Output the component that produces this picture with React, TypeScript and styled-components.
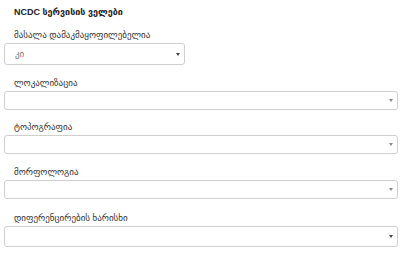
import styled, { createGlobalStyle } from 'styled-components'

const GlobalStyle = createGlobalStyle`
  body {
    margin: 0;
    background: #fff;
    font-family: "Liberation Sans", "DejaVu Sans", Arial, sans-serif;
  }
`

const Panel = styled.div`
  width: 408px;
  padding: 6px 10px 0 4px;
  box-sizing: border-box;
  display: flex;
  flex-direction: column;
`

const Title = styled.div`
  font-size: 9px;
  font-weight: 700;
  color: #222;
  padding-left: 10px;
  line-height: 12px;
  margin-bottom: 11px;
`

const Field = styled.div<{ $narrow?: boolean; $space: number }>`
  display: flex;
  flex-direction: column;
  gap: 2px;
  width: ${({ $narrow }) => ($narrow ? '181px' : '394px')};
  margin-bottom: ${({ $space }) => $space}px;
`

const Label = styled.label`
  font-size: 9px;
  color: #333;
  padding-left: 10px;
  line-height: 12px;
  white-space: nowrap;
`

const SelectBox = styled.div<{ $h: number }>`
  height: ${({ $h }) => $h}px;
  box-sizing: border-box;
  border: 1px solid #cfcfcf;
  border-radius: 3px;
  padding: 0 4px 0 10px;
  display: flex;
  align-items: center;
  justify-content: space-between;
  font-size: 9px;
  color: #777;
`

const Arrow = styled.span<{ $dark?: boolean }>`
  width: 0;
  height: 0;
  border-left: 2.5px solid transparent;
  border-right: 2.5px solid transparent;
  border-top: 3px solid ${({ $dark }) => ($dark ? '#444' : '#888')};
`

const fields = [
  { label: 'ლოკალიზაცია', h: 19, space: 11, dark: false },
  { label: 'ტოპოგრაფია', h: 19, space: 12, dark: false },
  { label: 'მორფოლოგია', h: 19, space: 13, dark: false },
  { label: 'დიფერენცირების ხარისხი', h: 21, space: 0, dark: true },
]

export default function App() {
  return (
    <>
      <GlobalStyle />
      <Panel>
        <Title>NCDC სერვისის ველები</Title>
        <Field $narrow $space={12}>
          <Label>მასალა დამაკმაყოფილებელია</Label>
          <SelectBox $h={22}>
            <span>კი</span>
            <Arrow $dark />
          </SelectBox>
        </Field>
        {fields.map((f) => (
          <Field key={f.label} $space={f.space}>
            <Label>{f.label}</Label>
            <SelectBox $h={f.h}>
              <span />
              <Arrow $dark={f.dark} />
            </SelectBox>
          </Field>
        ))}
      </Panel>
    </>
  )
}
